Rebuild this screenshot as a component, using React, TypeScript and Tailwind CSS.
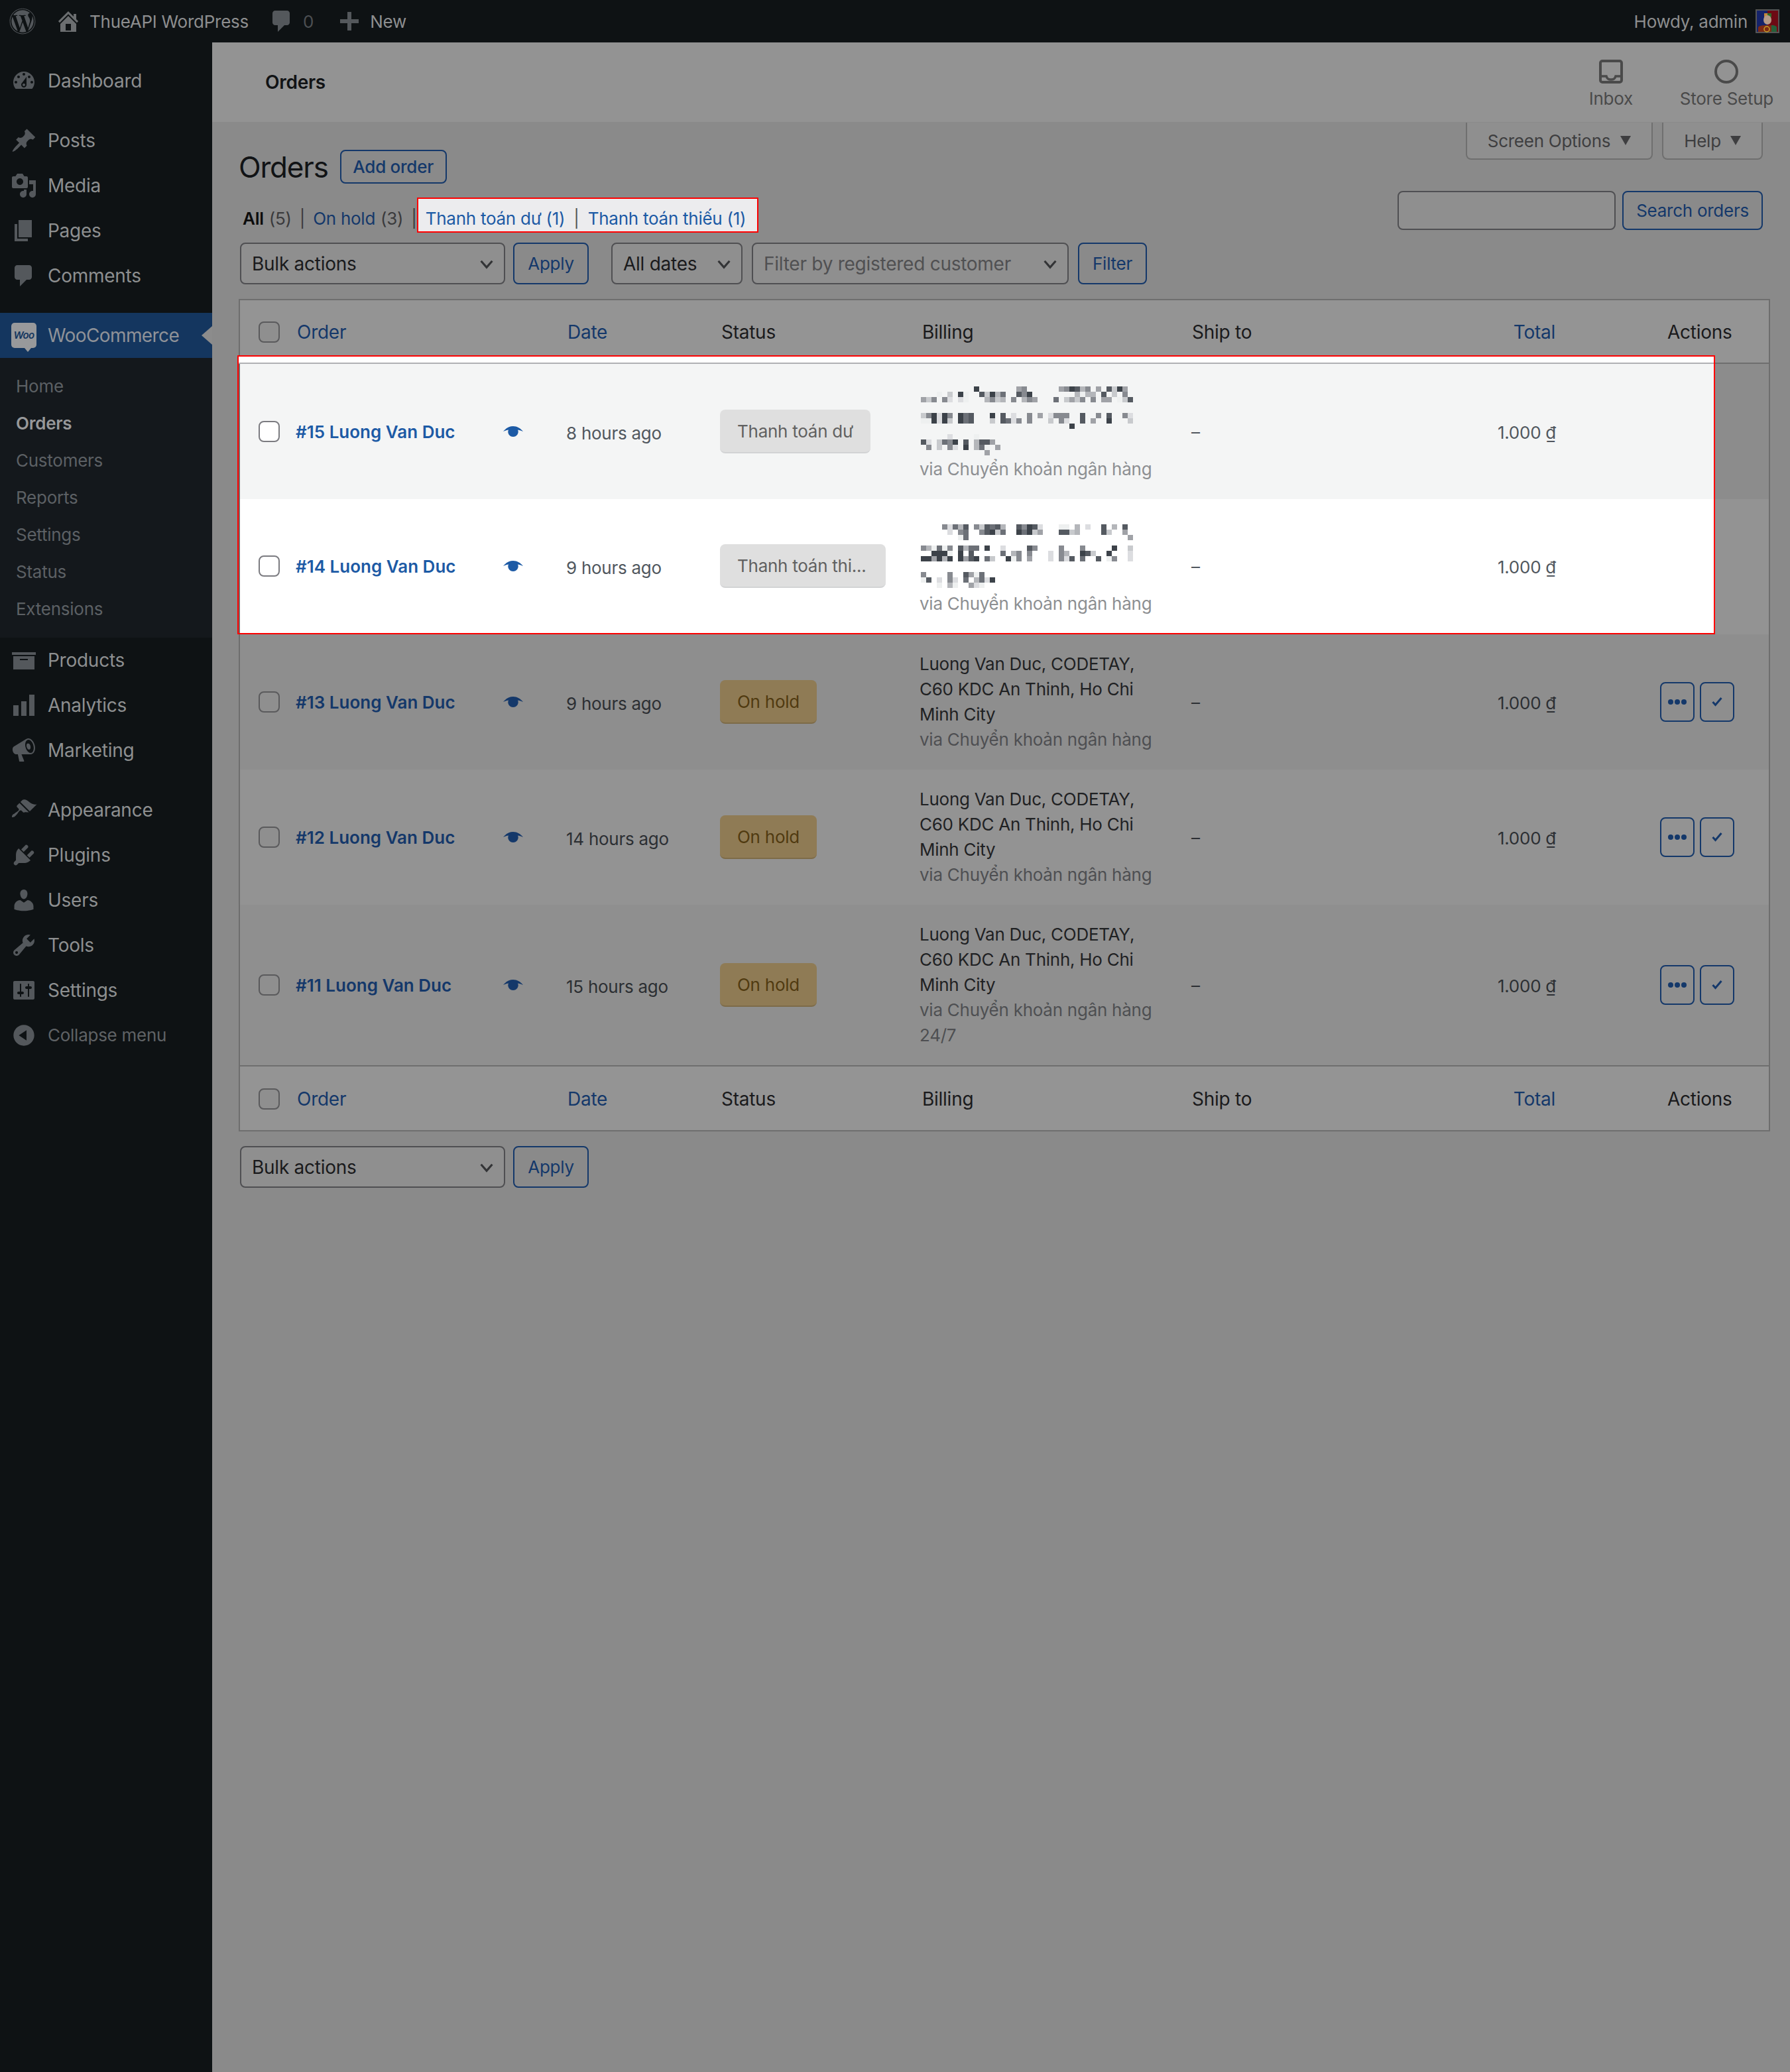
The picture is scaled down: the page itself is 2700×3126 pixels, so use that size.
import { FaWordpress } from "react-icons/fa";

const icons: Record<string, string> = {
  dashboard:
    "M3.76 16h12.48c1.1-1.37 1.76-3.11 1.76-5 0-4.42-3.58-8-8-8s-8 3.58-8 8c0 1.89.66 3.63 1.76 5zM10 4c.55 0 1 .45 1 1s-.45 1-1 1-1-.45-1-1 .45-1 1-1zM6 6c.55 0 1 .45 1 1s-.45 1-1 1-1-.45-1-1 .45-1 1-1zm8 0c.55 0 1 .45 1 1s-.45 1-1 1-1-.45-1-1 .45-1 1-1zm-5.37 5.55L12 7v6c0 1.1-.9 2-2 2s-2-.9-2-2c0-.57.24-1.08.63-1.45zM4 10c.55 0 1 .45 1 1s-.45 1-1 1-1-.45-1-1 .45-1 1-1zm12 0c.55 0 1 .45 1 1s-.45 1-1 1-1-.45-1-1 .45-1 1-1zm-5 3c0-.55-.45-1-1-1s-1 .45-1 1 .45 1 1 1 1-.45 1-1z",
  post: "M10.44 3.02l1.82-1.82 6.36 6.35-1.83 1.82c-1.05-.68-2.48-.57-3.41.36l-.75.75c-.92.93-1.04 2.35-.35 3.41l-1.83 1.82-2.41-2.41-2.8 2.79c-.42.42-3.38 2.71-3.8 2.29s1.86-3.39 2.28-3.81l2.79-2.79L4.1 9.36l1.83-1.82c1.05.69 2.48.57 3.4-.36l.75-.75c.93-.92 1.05-2.35.36-3.41z",
  media:
    "M13 11V4c0-.55-.45-1-1-1h-1.67L9 1H5L3.67 3H2c-.55 0-1 .45-1 1v7c0 .55.45 1 1 1h10c.55 0 1-.45 1-1zM7 4.5c1.38 0 2.5 1.12 2.5 2.5S8.38 9.5 7 9.5 4.5 8.38 4.5 7 5.62 4.5 7 4.5zM14 6h5v10.5c0 1.38-1.12 2.5-2.5 2.5S14 17.88 14 16.5s1.12-2.5 2.5-2.5c.17 0 .34.02.5.05V9h-3V6zm-4 8.05V13h2v3.5c0 1.38-1.12 2.5-2.5 2.5S7 17.88 7 16.5 8.12 14 9.5 14c.17 0 .34.02.5.05z",
  page: "M6 15V2h10v13H6zm-1 1h8v2H3V5h2v11z",
  comment: "M5 2h9c1.1 0 2 .9 2 2v7c0 1.1-.9 2-2 2h-2l-5 5v-5H5c-1.1 0-2-.9-2-2V4c0-1.1.9-2 2-2z",
  home: "M16 8.5l1.53 1.53-1.06 1.06L10 4.62l-6.47 6.47-1.06-1.06L10 2.5l4 4v-2h2v4zm-6-2.46l6 5.99V18H4v-5.97zM12 17v-5H8v5h4z",
  plus: "M8.5 3h3v5.5H17v3h-5.5V17h-3v-5.5H3v-3h5.5z",
  archive: "M19 4v2H1V4h18zM2 7h16v10H2V7zm11 3V9H7v1h6z",
  chart: "M18 18V2h-4v16h4zm-6 0V7H8v11h4zm-6 0v-8H2v8h4z",
  megaphone:
    "M18.15 5.94c.46 1.62.38 3.22-.02 4.48-.42 1.28-1.26 2.18-2.3 2.48-.16.06-.26.06-.4.06-.06.02-.12.02-.18.02-.06.02-.14.02-.22.02H8.2l2 5c.02.14-.06.26-.14.34-.08.1-.24.16-.34.16H6.95c-.1 0-.26-.06-.34-.16-.08-.08-.16-.2-.14-.34l-1-5H4.25l-.02-.02c-.5.06-1.08-.18-1.54-.62s-.88-1.08-1.06-1.88c-.24-.8-.2-1.56-.02-2.2.2-.62.58-1.08 1.06-1.3l.02-.02 9-5.4c.1-.06.18-.1.24-.16.06-.04.14-.08.24-.12.16-.08.28-.12.5-.18 1.04-.3 2.24.1 3.22.98s1.84 2.24 2.26 3.86zm-2.58 5.98h-.02c.4-.1.74-.34 1.04-.7.58-.7.86-1.76.86-3.04-.02-.64-.1-1.3-.28-1.98-.34-1.36-1.02-2.5-1.78-3.24s-1.68-1.1-2.46-.88c-.82.22-1.4.96-1.7 2-.32 1.04-.28 2.36.06 3.72.38 1.36 1 2.5 1.8 3.24.78.74 1.62 1.1 2.48.88zm-2.54-7.08c.22-.04.42-.02.62.04.38.16.76.48 1.02 1s.42 1.2.42 1.78c0 .3-.04.56-.12.8-.18.48-.44.84-.86.94-.34.1-.8-.06-1.14-.4-.34-.32-.66-.86-.84-1.48-.16-.62-.2-1.2-.12-1.68.08-.48.3-.8.5-.92z",
  brush:
    "M14.48 11.06L7.41 3.99l1.5-1.5c.5-.56 2.3-.47 3.51.32 1.21.8 1.43 1.28 2.91 2.1 1.18.64 2.45 1.26 4.45.85zm-.71.71L6.7 4.7 4.93 6.47c-.39.39-.39 1.02 0 1.41l1.06 1.06c.39.39.39 1.03 0 1.42-.6.6-1.43 1.11-2.21 1.69-.35.26-.7.53-1.01.84C1.43 13.23.91 14.19 1 15.5c1.31.09 2.27-.43 3.31-1.77.31-.31.58-.66.84-1.01.58-.78 1.09-1.61 1.69-2.21.39-.39 1.03-.39 1.42 0l1.06 1.06c.39.39 1.02.39 1.41 0z",
  plugin:
    "M13.11 4.36L9.87 7.6 8 5.73l3.24-3.24c.35-.34 1.05-.2 1.56.32.52.51.66 1.21.31 1.55zm-8 1.77l.91-1.12 9.01 9.01-1.19.84c-.71.71-2.63 1.16-3.82 1.16H6.14L4.9 17.26c-.59.59-1.54.59-2.12 0-.59-.58-.59-1.53 0-2.12l1.24-1.24v-3.88c0-1.13.4-3.19 1.09-3.89zm7.26 3.97l3.24-3.24c.34-.35 1.04-.21 1.55.31.52.51.66 1.21.31 1.55l-3.24 3.25z",
  users:
    "M10 9.25c-2.27 0-2.73-3.44-2.73-3.44C7 4.02 7.82 2 9.97 2c2.16 0 2.98 2.02 2.71 3.81 0 0-.41 3.44-2.68 3.44zm0 2.57L12.72 10c2.39 0 4.52 2.33 4.52 4.53v2.49s-3.65 1.13-7.24 1.13c-3.65 0-7.24-1.13-7.24-1.13v-2.49c0-2.25 1.94-4.48 4.47-4.48z",
  tools:
    "M16.68 9.77c-1.34 1.34-3.3 1.67-4.95.99l-5.41 6.52c-.99.99-2.59.99-3.58 0s-.99-2.59 0-3.57l6.52-5.42c-.68-1.65-.35-3.61.99-4.95 1.28-1.28 3.12-1.62 4.72-1.06l-2.89 2.89 2.82 2.82 2.86-2.87c.53 1.58.18 3.39-1.08 4.65zM3.81 16.21c.4.39 1.04.39 1.43 0 .4-.4.4-1.04 0-1.43-.39-.4-1.03-.4-1.43 0-.39.39-.39 1.03 0 1.43z",
  settings:
    "M18 16V4c0-.55-.45-1-1-1H3c-.55 0-1 .45-1 1v12c0 .55.45 1 1 1h14c.55 0 1-.45 1-1zM8 11h1c.55 0 1 .45 1 1s-.45 1-1 1H8v1.5c0 .28-.22.5-.5.5s-.5-.22-.5-.5V13H6c-.55 0-1-.45-1-1s.45-1 1-1h1V5.5c0-.28.22-.5.5-.5s.5.22.5.5V11zm5-2h-1c-.55 0-1-.45-1-1s.45-1 1-1h1V5.5c0-.28.22-.5.5-.5s.5.22.5.5V7h1c.55 0 1 .45 1 1s-.45 1-1 1h-1v5.5c0 .28-.22.5-.5.5s-.5-.22-.5-.5V9z",
  collapse: "M10 2.16c4.33 0 7.84 3.51 7.84 7.84s-3.51 7.84-7.84 7.84S2.16 14.33 2.16 10 5.71 2.16 10 2.16zm2 11.72V6.12L6.18 9.97z",
};

const Dash = ({ name, className }: { name: string; className: string }) => (
  <svg viewBox="0 0 20 20" className={className} fill="currentColor">
    <path d={icons[name]} />
  </svg>
);

const MenuItem = ({ icon, label, muted }: { icon: string; label: string; muted?: boolean }) => (
  <div className={`flex h-[68px] items-center ${muted ? "text-[#5f6265]" : "text-[#8d8f90]"}`}>
    <span className="flex w-[72px] justify-center text-[#54585c]">
      <Dash name={icon} className="h-10 w-10" />
    </span>
    <span className={muted ? "-mt-[2px] text-[26px]" : "text-[28px]"}>{label}</span>
  </div>
);

const Sidebar = () => (
  <aside className="w-80 shrink-0 bg-[#0e1214] pt-6">
    <MenuItem icon="dashboard" label="Dashboard" />
    <div className="mt-[22px]">
      <MenuItem icon="post" label="Posts" />
      <MenuItem icon="media" label="Media" />
      <MenuItem icon="page" label="Pages" />
      <MenuItem icon="comment" label="Comments" />
    </div>
    <div className="relative mt-[22px] flex h-[68px] items-center bg-[#14365f] text-[28px] tracking-[-0.6px] text-[#8f9298]">
      <span className="flex w-[72px] justify-center">
        <span className="relative flex h-[38px] w-[38px] items-center justify-center rounded-[5px] bg-[#98999b] text-[15px] font-semibold italic text-[#14365f]">
          Woo
          <span className="absolute -bottom-[6px] left-[20px] h-0 w-0 border-x-[5px] border-t-[6px] border-x-transparent border-t-[#98999b]" />
        </span>
      </span>
      WooCommerce
      <span className="absolute right-0 top-[20px] h-0 w-0 border-y-[14px] border-r-[16px] border-y-transparent border-r-[#8c8c8c]" />
    </div>
    <div className="bg-[#14181c] pb-4 pt-[14px] text-[26px] text-[#5c6064]">
      {["Home", "Orders", "Customers", "Reports", "Settings", "Status", "Extensions"].map((s) => (
        <div
          key={s}
          className={`flex h-14 items-center pl-6 ${s === "Orders" ? "font-semibold text-[#97989a]" : ""}`}
        >
          {s}
        </div>
      ))}
    </div>
    <MenuItem icon="archive" label="Products" />
    <MenuItem icon="chart" label="Analytics" />
    <MenuItem icon="megaphone" label="Marketing" />
    <div className="mt-[22px]">
      <MenuItem icon="brush" label="Appearance" />
      <MenuItem icon="plugin" label="Plugins" />
      <MenuItem icon="users" label="Users" />
      <MenuItem icon="tools" label="Tools" />
      <MenuItem icon="settings" label="Settings" />
      <MenuItem icon="collapse" label="Collapse menu" muted />
    </div>
  </aside>
);

const Avatar = () => (
  <svg viewBox="0 0 36 36" className="ml-3 h-9 w-9">
    <rect width="36" height="36" fill="#555" />
    <rect x="2" y="2" width="16" height="32" fill="#15236b" />
    <rect x="18" y="2" width="16" height="32" fill="#6d0a14" />
    <rect x="13" y="6" width="5" height="6" fill="#c4873a" />
    <rect x="18" y="6" width="6" height="6" fill="#2f6a2a" />
    <ellipse cx="18" cy="16" rx="6" ry="7" fill="#b59a88" />
    <path d="M4 34v-6c0-3 5-4 14-4s14 1 14 4v6z" fill="#7e2a14" />
    <path d="M24 24c6 0 8 2 8 4v6H24z" fill="#24603a" />
    <circle cx="17" cy="30" r="4" fill="none" stroke="#c9a227" strokeWidth="1.5" />
  </svg>
);

const AdminBar = () => (
  <header className="flex h-16 items-center bg-[#0e1214] text-[26px] text-[#8d8e8f]">
    <FaWordpress className="ml-[14px] h-10 w-10 text-[#54585c]" />
    <Dash name="home" className="ml-[29px] h-10 w-10 text-[#6b6e70]" />
    <span className="ml-3">ThueAPI WordPress</span>
    <Dash name="comment" className="ml-[30px] h-10 w-10 text-[#54585c]" />
    <span className="ml-3 text-[#4c4f52]">0</span>
    <Dash name="plus" className="ml-[34px] h-10 w-10 text-[#54585c]" />
    <span className="ml-[11px]">New</span>
    <span className="ml-auto">Howdy, admin</span>
    <Avatar />
    <span className="w-4" />
  </header>
);

const Chevron = () => (
  <svg viewBox="0 0 20 20" className="h-6 w-6 text-[#333436]" fill="none" stroke="currentColor" strokeWidth="2.6">
    <path d="M3 6.5l7 8 7-8" />
  </svg>
);

const Select = ({ label, width, muted }: { label: string; width: string; muted?: boolean }) => (
  <div
    className={`flex h-[63px] items-center justify-between rounded-lg border-2 border-[#4f4f52] bg-[#8f8f8f] pl-[16px] pr-[14px] text-[28px] ${width} ${
      muted ? "text-[#505052]" : "text-[#1a1a1c]"
    }`}
  >
    {label}
    <Chevron />
  </div>
);

const Btn = ({ label, className = "" }: { label: string; className?: string }) => (
  <button className={`flex h-[63px] items-center justify-center rounded-lg border-2 border-[#14386a] text-[26px] text-[#14386a] ${className}`}>
    {label}
  </button>
);

const Tri = () => (
  <svg viewBox="0 0 16 14" className="h-[14px] w-4 fill-[#3e3e40]">
    <path d="M0 0h16L8 14z" />
  </svg>
);

const HeadRow = ({ top }: { top?: boolean }) => (
  <div className={`flex h-[96px] items-center bg-[#949494] pt-[2px] text-[28px] ${top ? "border-b-2 border-[#6e6e6e]" : ""}`}>
    <div className="w-[86px] pl-[28px]">
      <input type="checkbox" className="block h-8 w-8 appearance-none rounded-lg border-2 border-[#5a5a5c] bg-[#8f8f8f]" />
    </div>
    <span className="w-[408px] text-[#14386a]">Order</span>
    <span className="w-[232px] text-[#14386a]">Date</span>
    <span className="w-[303px] text-[#1a1a1c]">Status</span>
    <span className="w-[407px] text-[#1a1a1c]">Billing</span>
    <span className="w-[400px] text-[#1a1a1c]">Ship to</span>
    <span className="w-[148px] text-right text-[#14386a]">Total</span>
    <span className="ml-[169px] text-[#1a1a1c]">Actions</span>
  </div>
);

const palette = ["", "#eef0f0", "#dcdde0", "#c8cacd", "#b4b6ba", "#a0a2a7", "#878a90", "#6c7077", "#555a61", "#3c4249"];

const Mosaic = ({ rows, dy }: { rows: [number, string][]; dy: number }) => (
  <svg viewBox="0 0 320 114" className="block h-[114px] w-[320px]">
    {rows.map(([y, row]) =>
      row.split("").map((c, i) =>
        c === "0" ? null : <rect key={`${y}-${i}`} x={i * 8} y={y + dy} width="8" height="8" fill={palette[Number(c)]} />
      )
    )}
  </svg>
);

const blur15: [number, string][] = [
  [0, "0000000000900000005600000056984605083950"],
  [8, "0001030910083947008690000000041440803060"],
  [16, "5360620210004634060465000703536060550138"],
  [40, "3692960978000908020060502666008006080062"],
  [48, "1192930978000308726060003062008050090003"],
  [56, "0000000000000000000000000000900000000000"],
  [72, "0000020000100000000000000000000000000000"],
  [80, "8203769080488500000000000000000000000000"],
  [88, "0603062090471050000000000000000000000000"],
  [96, "0000000000005000000000000000000000000000"],
];

const blur14: [number, string][] = [
  [0, "0000627480638784008698200011040200804080"],
  [8, "0000020670068937009793500088340000830050"],
  [16, "0000000170000000000000000000000000000005"],
  [32, "6417160847709002000086000060006000009003"],
  [40, "0099910908000007046060002064009830090002"],
  [48, "9959490958907300916050002062807008016002"],
  [72, "6000060085170000000000000000000000000000"],
  [80, "1802062070472900000000000000000000000000"],
  [88, "0001041005210000000000000000000000000000"],
];

const Eye = ({ lit }: { lit?: boolean }) => (
  <svg viewBox="0 0 30 16" className={`h-4 w-[30px] ${lit ? "text-[#1c5aa5]" : "text-[#14386a]"}`} fill="currentColor">
    <path d="M0 8C4 3 9 0 15 0s11 3 15 8c-2.500-1-5-2-8-2.500 .5 1 .7 2 .7 3 0 4-3.500 7.500-7.700 7.500s-7.700-3.500-7.700-7.500c0-1 .2-2 .7-3C5 6 2.500 7 0 8z" />
  </svg>
);

type Order = {
  id: string;
  date: string;
  status: string;
  pill: string;
  mosaic?: [number, string][];
  dy?: number;
  lit?: string;
  bg: string;
  h: string;
  long?: boolean;
};

const orders: Order[] = [
  { id: "#15", date: "8 hours ago", status: "Thanh toán dư", pill: "w-[227px]", mosaic: blur15, dy: 8, lit: "h-[204px] bg-[#f4f5f5]", bg: "bg-[#8c8c8c]", h: "h-[204px]" },
  { id: "#14", date: "9 hours ago", status: "Thanh toán thi...", pill: "w-[250px]", mosaic: blur14, dy: 13, lit: "h-[202px] bg-white", bg: "bg-[#939393]", h: "h-[204px]" },
  { id: "#13", date: "9 hours ago", status: "On hold", pill: "w-[146px]", bg: "bg-[#8e8e8e]", h: "h-[204px]" },
  { id: "#12", date: "14 hours ago", status: "On hold", pill: "w-[146px]", bg: "bg-[#939393]", h: "h-[204px]" },
  { id: "#11", date: "15 hours ago", status: "On hold", pill: "w-[146px]", bg: "bg-[#8f8f8f]", h: "h-[242px]", long: true },
];

const OrderRow = ({ o }: { o: Order }) => {
  const lit = !!o.lit;
  return (
    <div className={`${o.h} ${o.bg}`}>
      <div className={`flex items-center ${lit ? `w-[2223px] ${o.lit}` : "h-full"}`}>
        <div className="w-[84px] pl-[28px]">
          <input
            type="checkbox"
            className={`block h-8 w-8 appearance-none rounded-lg border-2 ${lit ? "border-[#7b7b80] bg-white" : "border-[#5a5a5c] bg-[#8f8f8f]"}`}
          />
        </div>
        <div className="flex w-[408px] items-center">
          <a className={`w-[313px] text-[26px] font-semibold tracking-normal ${lit ? "text-[#1c5aa5]" : "text-[#14386a]"}`}>{o.id} Luong Van Duc</a>
          <Eye lit={lit} />
        </div>
        <span className={`mt-1 w-[232px] text-[26px] ${lit ? "text-[#50575e]" : "text-[#2c2f33]"}`}>{o.date}</span>
        <div className="w-[303px]">
          <span
            className={`flex h-[66px] items-center rounded-lg border-b-2 pl-[26px] text-[26px] ${o.pill} ${
              lit ? "border-[#d2d3d4] bg-[#dfdfdf] text-[#616161]" : "border-[#7d6b48] bg-[#8f7b55] text-[#503a10]"
            }`}
          >
            {o.status}
          </span>
        </div>
        <div className="w-[408px] text-[26px] leading-[38px]">
          {o.mosaic ? (
            <Mosaic rows={o.mosaic} dy={o.dy ?? 0} />
          ) : (
            <div className="-ml-[2px] w-[340px] text-[#1f2123]">Luong Van Duc, CODETAY, C60 KDC An Thinh, Ho Chi Minh City</div>
          )}
          <div className={`-ml-[2px] w-[380px] ${lit ? "text-[#8d8f92]" : "text-[#4e4f52]"}`}>
            via Chuyển khoản ngân hàng
            {o.long && (
              <>
                <br />
                24/7
              </>
            )}
          </div>
        </div>
        <span className={`w-[300px] text-[26px] ${lit ? "text-[#50575e]" : "text-[#2c2f33]"}`}>–</span>
        <span className={`mt-[2px] w-[250px] text-right text-[26px] ${lit ? "text-[#50575e]" : "text-[#2c2f33]"}`}>1.000 ₫</span>
        {!lit && (
          <div className="ml-[157px] flex gap-2">
            <button className="flex h-[60px] w-[52px] items-center justify-center rounded-lg border-2 border-[#14386a] text-[#14386a]">
              <svg viewBox="0 0 28 10" className="h-[10px] w-[28px]" fill="currentColor">
                <circle cx="4" cy="5" r="4" />
                <circle cx="14" cy="5" r="4" />
                <circle cx="24" cy="5" r="4" />
              </svg>
            </button>
            <button className="flex h-[60px] w-[52px] items-center justify-center rounded-lg border-2 border-[#14386a] text-[#14386a]">
              <svg viewBox="0 0 16 14" className="h-[14px] w-4" fill="none" stroke="currentColor" strokeWidth="3">
                <path d="M1.500 7l4 4.500L14.500 1" />
              </svg>
            </button>
          </div>
        )}
      </div>
    </div>
  );
};

const Main = () => (
  <main className="flex-1 bg-[#8a8a8a]">
    <div className="flex h-[120px] items-center bg-[#939393] pl-20 pr-[25px]">
      <h2 className="text-[28px] font-semibold text-[#111315]">Orders</h2>
      <div className="ml-auto mt-[10px] flex items-start gap-[71px] text-[26px] text-[#4a4a4a]">
        <div className="flex flex-col items-center gap-[3px]">
          <svg viewBox="0 0 36 36" className="h-9 w-9" fill="none" stroke="currentColor" strokeWidth="4">
            <rect x="2" y="2" width="32" height="32" rx="3" />
            <path d="M2 25h9c1 4 3 5 7 5s6-1 7-5h9" strokeWidth="3.500" />
          </svg>
          Inbox
        </div>
        <div className="flex flex-col items-center gap-[3px]">
          <svg viewBox="0 0 36 36" className="h-9 w-9" fill="none" stroke="currentColor" strokeWidth="4">
            <circle cx="18" cy="18" r="16" />
          </svg>
          Store Setup
        </div>
      </div>
    </div>

    <div className="pl-10 pr-[30px]">
      <div className="flex h-[57px] justify-end gap-[14px] pr-[11px] pt-px text-[26px] text-[#3e3e40]">
        <div className="flex w-[282px] items-center justify-center gap-[15px] rounded-b-lg border-2 border-t-0 border-[#6f6f6f] bg-[#8f8f8f]">
          Screen Options <Tri />
        </div>
        <div className="flex w-[152px] items-center justify-center gap-[14px] rounded-b-lg border-2 border-t-0 border-[#6f6f6f] bg-[#8f8f8f]">
          Help <Tri />
        </div>
      </div>

      <div className="-mt-[15px] flex h-[51px] items-center">
        <h1 className="text-[44px] leading-none tracking-[-1.2px] text-[#111315]">Orders</h1>
        <Btn label="Add order" className="ml-[18px] !h-[51px] w-[161px] font-medium" />
      </div>

      <div className="mt-[11px] flex h-[63px] items-start justify-between">
        <div className="mt-[10px] flex h-[53px] items-center text-[26px] text-[#3a3a3c]">
          <span className="ml-[6px] pt-[10px] font-semibold text-[#0c0c0c]">All</span>
          <span className="ml-[8px] pt-[10px]">(5)</span>
          <span className="ml-3 pt-[10px]">|</span>
          <span className="ml-3 pt-[10px] text-[#14386a]">On hold</span>
          <span className="ml-[8px] pt-[10px]">(3)</span>
          <span className="ml-3 pt-[10px]">|</span>
          <div className="flex h-[53px] w-[515px] items-center border-2 border-[#f00] bg-[#ececee] pl-[11px] pt-[10px]">
            <a className="text-[#1c5aa5]">Thanh toán dư (1)</a>
            <span className="mx-[13px] text-[#555]">|</span>
            <a className="text-[#1c5aa5]">Thanh toán thiếu (1)</a>
          </div>
        </div>
        <div className="mr-[11px] flex gap-[10px]">
          <input className="h-[59px] w-[329px] rounded-lg border-2 border-[#4f4f52] bg-[#8f8f8f]" />
          <Btn label="Search orders" className="!h-[59px] w-[212px]" />
        </div>
      </div>

      <div className="mt-[15px] flex items-start">
        <Select label="Bulk actions" width="ml-[2px] w-[400px]" />
        <Btn label="Apply" className="ml-3 w-[114px]" />
        <Select label="All dates" width="ml-[34px] w-[198px]" />
        <Select label="Filter by registered customer" width="ml-[14px] w-[478px]" muted />
        <Btn label="Filter" className="ml-[14px] w-[104px]" />
      </div>

      <div className="relative mt-[22px] border-2 border-[#6e6e6e]">
        <HeadRow top />
        {orders.map((o) => (
          <OrderRow key={o.id} o={o} />
        ))}
        <div className="border-t-2 border-[#6e6e6e]">
          <HeadRow />
        </div>
        <div className="absolute -left-[4px] top-[83px] h-[421px] w-[2229px] border-2 border-[#f00]">
          <div className="h-[9px] bg-white" />
          <div className="h-[2px] bg-[#b0b0b4]" />
        </div>
      </div>

      <div className="mt-[22px] flex">
        <Select label="Bulk actions" width="ml-[2px] w-[400px]" />
        <Btn label="Apply" className="ml-3 w-[114px]" />
      </div>
    </div>
  </main>
);

export default function App() {
  return (
    <div className="flex min-h-[3126px] flex-col font-['Inter',sans-serif] tracking-[-0.26px]">
      <AdminBar />
      <div className="flex flex-1">
        <Sidebar />
        <Main />
      </div>
    </div>
  );
}
